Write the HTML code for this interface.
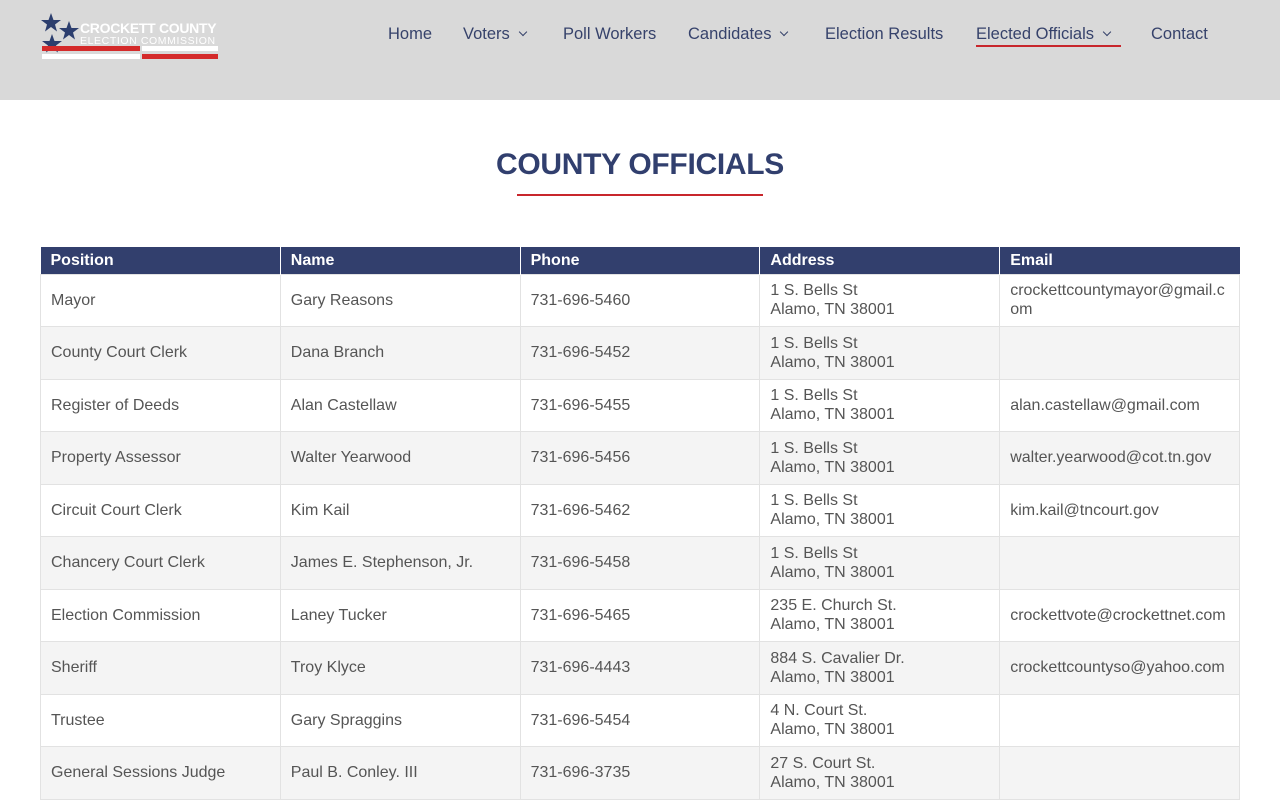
<!DOCTYPE html>
<html><head><meta charset="utf-8"><style>
*{margin:0;padding:0;box-sizing:border-box}
body{width:1280px;height:800px;overflow:hidden;background:#fff;font-family:"Liberation Sans",sans-serif}
.hdr{height:100px;background:#d9d9d9;position:relative}
.nav{position:absolute;top:25px;font-size:16.5px;color:#36426b;white-space:nowrap}
.nav span{position:absolute;top:0}
.chev{display:inline-block;width:6px;height:6px;border-right:1.3px solid #36426b;border-bottom:1.3px solid #36426b;transform:rotate(45deg);margin-left:10px;position:relative;top:-4px}
.ul{position:absolute;left:976px;top:45px;width:145px;height:2px;background:#c8262c}
h1{position:absolute;top:148px;left:0;width:1280px;text-align:center;font-size:30px;color:#313f6e;font-weight:bold;letter-spacing:-0.3px}
.hr{position:absolute;left:517px;top:194px;width:246px;height:2px;background:#c8262c}
table{position:absolute;left:40px;top:247px;width:1200px;border-collapse:collapse;table-layout:fixed}
th{background:#323f6d;color:#fff;text-align:left;font-size:16px;height:27px;padding:2px 10px 0;border-left:1px solid #fff}
th:first-child{border-left:none}
td{font-size:16px;color:#555;padding:0 10px;height:52.5px;border:1px solid #e2e2e2;line-height:19px;word-break:break-all}
tr:nth-child(odd) td{background:#f4f4f4}
</style></head><body>
<div class="hdr">
<svg style="position:absolute;left:40px;top:12px" width="180" height="52" viewBox="0 0 180 52">
<polygon points="11,1 13.5,8 21,8 15,12.5 17,19.5 11,15 5,19.5 7,12.5 1,8 8.5,8" fill="#2c3e6e"/>
<polygon points="29,9 31.5,16 39,16 33,20.5 35,27.5 29,23 23,27.5 25,20.5 19,16 26.5,16" fill="#2c3e6e"/>
<polygon points="12,22 14.5,29 22,29 16,33.5 18,40.5 12,36 6,40.5 8,33.5 2,29 9.5,29" fill="#2c3e6e"/>
<rect x="2" y="34" width="98" height="5" fill="#d42a2a"/><rect x="102" y="34" width="76" height="5" fill="#fff"/>
<rect x="2" y="42" width="98" height="5" fill="#fff"/><rect x="102" y="42" width="76" height="5" fill="#d42a2a"/>
<text x="40" y="21" font-family="Liberation Sans" font-weight="bold" font-size="14" fill="#fff" letter-spacing="-0.3">CROCKETT COUNTY</text>
<text x="40" y="32" font-family="Liberation Sans" font-size="10.5" fill="#fff" letter-spacing="0.6">ELECTION COMMISSION</text>
</svg>
<div class="nav" style="left:0;width:1280px">
<span style="left:388px">Home</span>
<span style="left:463px">Voters<i class="chev"></i></span>
<span style="left:563px">Poll Workers</span>
<span style="left:688px">Candidates<i class="chev"></i></span>
<span style="left:825px">Election Results</span>
<span style="left:976px">Elected Officials<i class="chev"></i></span>
<span style="left:1151px">Contact</span>
</div>
<div class="ul"></div>
</div>
<h1>COUNTY OFFICIALS</h1>
<div class="hr"></div>
<table>
<tr><th>Position</th><th>Name</th><th>Phone</th><th>Address</th><th>Email</th></tr>
<tr><td>Mayor</td><td>Gary Reasons</td><td>731-696-5460</td><td>1 S. Bells St<br>Alamo, TN 38001</td><td>crockettcountymayor@gmail.com</td></tr>
<tr><td>County Court Clerk</td><td>Dana Branch</td><td>731-696-5452</td><td>1 S. Bells St<br>Alamo, TN 38001</td><td></td></tr>
<tr><td>Register of Deeds</td><td>Alan Castellaw</td><td>731-696-5455</td><td>1 S. Bells St<br>Alamo, TN 38001</td><td>alan.castellaw@gmail.com</td></tr>
<tr><td>Property Assessor</td><td>Walter Yearwood</td><td>731-696-5456</td><td>1 S. Bells St<br>Alamo, TN 38001</td><td>walter.yearwood@cot.tn.gov</td></tr>
<tr><td>Circuit Court Clerk</td><td>Kim Kail</td><td>731-696-5462</td><td>1 S. Bells St<br>Alamo, TN 38001</td><td>kim.kail@tncourt.gov</td></tr>
<tr><td>Chancery Court Clerk</td><td>James E. Stephenson, Jr.</td><td>731-696-5458</td><td>1 S. Bells St<br>Alamo, TN 38001</td><td></td></tr>
<tr><td>Election Commission</td><td>Laney Tucker</td><td>731-696-5465</td><td>235 E. Church St.<br>Alamo, TN 38001</td><td>crockettvote@crockettnet.com</td></tr>
<tr><td>Sheriff</td><td>Troy Klyce</td><td>731-696-4443</td><td>884 S. Cavalier Dr.<br>Alamo, TN 38001</td><td>crockettcountyso@yahoo.com</td></tr>
<tr><td>Trustee</td><td>Gary Spraggins</td><td>731-696-5454</td><td>4 N. Court St.<br>Alamo, TN 38001</td><td></td></tr>
<tr><td>General Sessions Judge</td><td>Paul B. Conley. III</td><td>731-696-3735</td><td>27 S. Court St.<br>Alamo, TN 38001</td><td></td></tr>
</table>
</body></html>
